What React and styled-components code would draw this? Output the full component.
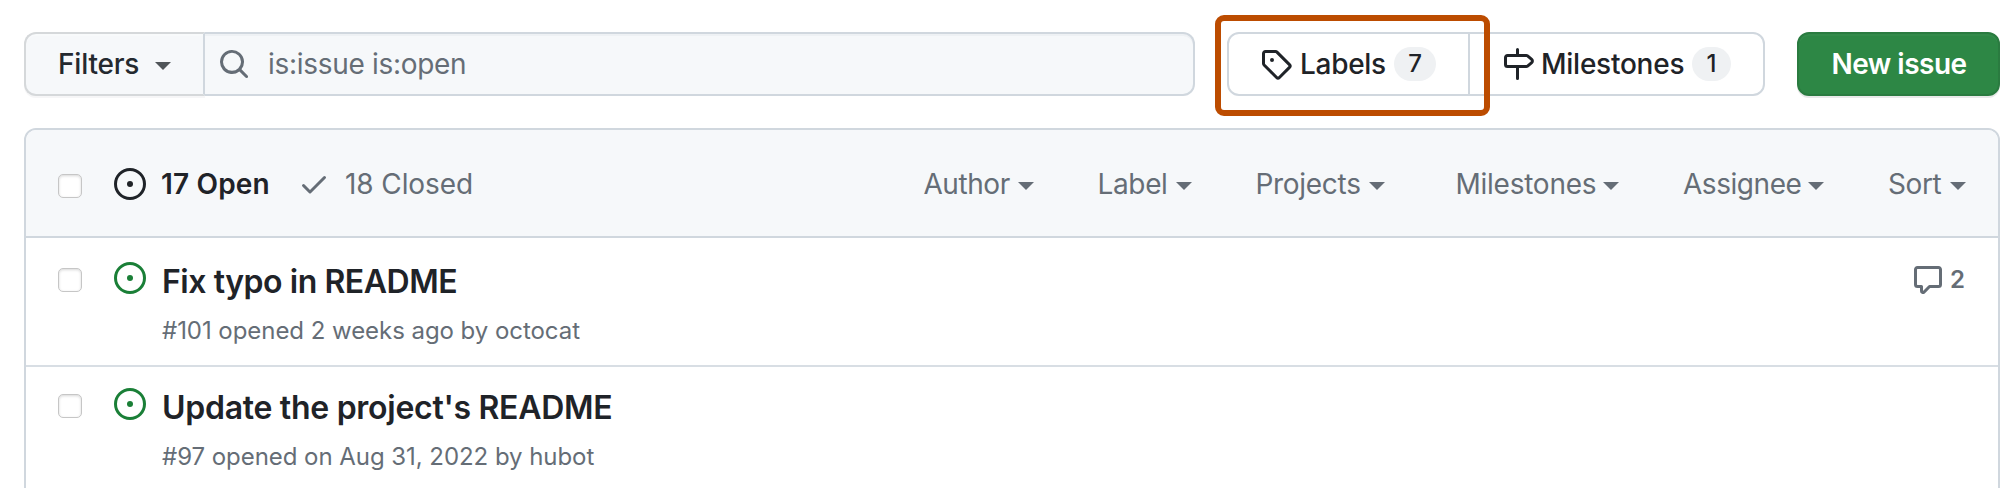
import React from 'react';
import styled, { createGlobalStyle } from 'styled-components';

const GlobalStyle = createGlobalStyle`
  *, *::before, *::after { box-sizing: border-box; }
  body {
    margin: 0;
    background: #fff;
    color: #1f2328;
    font-family: Inter, "Liberation Sans", sans-serif;
    font-size: 28px;
    line-height: 40px;
    overflow: hidden;
  }
`;

const Page = styled.main`
  height: 488px;
  padding: 32px 10px 0 24px;
  overflow: hidden;
`;

const Toolbar = styled.div`
  display: flex;
  height: 64px;
  width: 1976px;
`;

const Text = styled.span`
  flex: none;
  white-space: nowrap;
  width: ${(p) => p.$w}px;
  margin-left: ${(p) => p.$gap || 0}px;
  letter-spacing: ${(p) => p.$ls || 0}px;
  font-weight: ${(p) => p.$weight || 400};
`;

const Icon = styled.svg.attrs({ viewBox: '0 0 16 16', width: 32, height: 32, 'aria-hidden': true })`
  flex: none;
  display: block;
  fill: currentColor;
`;

const Caret = styled.span`
  flex: none;
  width: 0;
  height: 0;
  margin-top: 4px;
  border: 8px solid transparent;
  border-top-color: currentColor;
  border-bottom-width: 0;
`;

const FiltersButton = styled.button`
  display: flex;
  align-items: center;
  gap: 16px;
  width: 181px;
  height: 64px;
  padding: 0 0 0 32px;
  border: 2px solid #d5d8da;
  border-right-color: #d0d7de;
  border-radius: 12px 0 0 12px;
  background: #f6f8fa;
  box-shadow: 0 2px 0 rgba(31, 35, 40, 0.04), inset 0 2px 0 rgba(255, 255, 255, 0.25);
  color: #24292f;
  font: inherit;
  text-align: left;

  ${Caret} { color: #505559; }
`;

const SearchField = styled.div`
  display: flex;
  align-items: center;
  width: 990px;
  height: 64px;
  padding-left: 13px;
  gap: 18px;
  border: 2px solid #d0d7de;
  border-left: 0;
  border-radius: 0 12px 12px 0;
  background: #f6f8fa;
  box-shadow: inset 0 2px 0 rgba(208, 215, 222, 0.2);
  color: #656d76;
`;

const Subnav = styled.nav`
  position: relative;
  display: flex;
  width: 538px;
  height: 64px;
  margin-left: 32px;
  border: 2px solid #d0d7de;
  border-radius: 12px;
`;

const SubnavLink = styled.a`
  display: flex;
  align-items: center;
  width: ${(p) => p.$width}px;
  padding-left: ${(p) => p.$pad}px;
  border-right: ${(p) => (p.$divided ? '2px solid #d0d7de' : '0')};
`;

const Counter = styled.span`
  width: ${(p) => p.$width}px;
  height: 34px;
  margin-left: 8px;
  border-radius: 17px;
  background: #eff1f3;
  font-size: 24px;
  font-weight: 500;
  line-height: 34px;
  text-align: center;
`;

const Highlight = styled.div`
  position: absolute;
  left: -14px;
  top: -19px;
  width: 275px;
  height: 101px;
  border: 6px solid #bc4c00;
  border-radius: 9px;
  pointer-events: none;
`;

const NewIssueButton = styled.button`
  display: flex;
  align-items: center;
  width: 203px;
  height: 64px;
  margin-left: 32px;
  padding: 0 0 0 30px;
  border: 2px solid #2a7b40;
  border-radius: 12px;
  background: #2d8745;
  box-shadow: 0 2px 0 rgba(31, 35, 40, 0.1), inset 0 2px 0 rgba(255, 255, 255, 0.03);
  color: #fff;
  font: inherit;
`;

const IssueBox = styled.section`
  width: 1976px;
  height: 400px;
  margin-top: 32px;
  border: 2px solid #d0d7de;
  border-radius: 12px 12px 0 0;
  overflow: hidden;
`;

const BoxHeader = styled.header`
  display: flex;
  align-items: center;
  height: 108px;
  padding: 2px 0 0 32px;
  border-bottom: 2px solid #d0d7de;
  background: #f6f8fa;
  color: #656d76;
`;

const Checkbox = styled.span`
  flex: none;
  width: 24px;
  height: 24px;
  margin-top: ${(p) => p.$drop}px;
  border: 1px solid #c6c6c6;
  border-radius: 5px;
  background: #fff;
  box-shadow: inset 0 1px 3px rgba(0, 0, 0, 0.16);
`;

const StateTab = styled.div`
  display: flex;
  align-items: center;
  gap: 15px;
  margin-left: ${(p) => p.$gap}px;
  color: ${(p) => (p.$active ? '#1f2328' : 'inherit')};
`;

const Menus = styled.div`
  display: flex;
  margin-left: auto;
  gap: 64px;
  padding-right: 32px;
`;

const Menu = styled.div`
  display: flex;
  align-items: center;
  gap: 8px;
  margin-left: ${(p) => p.$gap || 0}px;
`;

const IssueRow = styled.article`
  display: flex;
  height: ${(p) => p.$height}px;
  padding: ${(p) => p.$top}px 33px 0 32px;
  border-bottom: 2px solid #d8dee4;
`;

const OpenIcon = styled(Icon)`
  margin: 8px 16px 0 32px;
  color: #1a7f37;
`;

const IssueBody = styled.div`
  display: flex;
  flex-direction: column;
`;

const Title = styled.h2`
  margin: 4px 0 0;
  font-size: 32px;
  line-height: 48px;
  font-weight: 600;
  white-space: nowrap;
  letter-spacing: ${(p) => p.$ls}px;
`;

const Meta = styled.p`
  margin: 7px 0 0;
  color: #656d76;
  font-size: 24px;
  line-height: 36px;
  white-space: nowrap;
  letter-spacing: ${(p) => p.$ls}px;
`;

const Comments = styled.a`
  display: flex;
  align-items: center;
  gap: 6px;
  height: 32px;
  margin: 10px 0 0 auto;
  color: #656d76;
  font-size: 24px;
  font-weight: 600;
`;

const OpenPaths = () => (
  <>
    <path d="M8 9.5a1.5 1.5 0 1 0 0-3 1.5 1.5 0 0 0 0 3Z" />
    <path d="M8 0a8 8 0 1 1 0 16A8 8 0 0 1 8 0ZM1.5 8a6.5 6.5 0 1 0 13 0 6.5 6.5 0 0 0-13 0Z" />
  </>
);

const menus = [
  { label: 'Author', w: 86, ls: -0.45 },
  { label: 'Label', w: 70, ls: -0.35 },
  { label: 'Projects', w: 105, ls: -0.3 },
  { label: 'Milestones', w: 139.5, ls: -0.25, gap: 7 },
  { label: 'Assignee', w: 117, ls: -0.45 },
  { label: 'Sort', w: 54, ls: -0.4 },
];

const issues = [
  { title: 'Fix typo in README', ls: -0.45, meta: '#101 opened 2 weeks ago by octocat', mls: -0.05, comments: 2, height: 129, top: 16 },
  { title: "Update the project's README", ls: -0.28, meta: '#97 opened on Aug 31, 2022 by hubot', mls: -0.05, height: 140, top: 13 },
];

export default function App() {
  return (
    <>
      <GlobalStyle />
      <Page>
        <Toolbar>
          <FiltersButton>
            <Text $w={81} $ls={-0.2} $weight={500}>Filters</Text>
            <Caret />
          </FiltersButton>
          <SearchField>
            <Icon>
              <path d="M10.68 11.74a6 6 0 0 1-7.922-8.982 6 6 0 0 1 8.982 7.922l3.04 3.04a.749.749 0 0 1-.326 1.275.749.749 0 0 1-.734-.215ZM11.5 7a4.499 4.499 0 1 0-8.997 0A4.499 4.499 0 0 0 11.5 7Z" />
            </Icon>
            <Text $w={200} $ls={-0.3}>is:issue is:open</Text>
          </SearchField>
          <Subnav>
            <SubnavLink $width={241} $pad={31} $divided>
              <Icon>
                <path d="M1 7.775V2.75C1 1.784 1.784 1 2.75 1h5.025c.464 0 .91.184 1.238.513l6.25 6.25a1.75 1.75 0 0 1 0 2.474l-5.026 5.026a1.75 1.75 0 0 1-2.474 0l-6.25-6.25A1.752 1.752 0 0 1 1 7.775Zm1.5 0c0 .066.026.13.073.177l6.25 6.25a.25.25 0 0 0 .354 0l5.025-5.025a.25.25 0 0 0 0-.354l-6.25-6.25a.25.25 0 0 0-.177-.073H2.75a.25.25 0 0 0-.25.25ZM6 5a1 1 0 1 1 0 2 1 1 0 0 1 0-2Z" />
              </Icon>
              <Text $w={86} $gap={8} $ls={-0.3} $weight={500}>Labels</Text>
              <Counter $width={42}>7</Counter>
            </SubnavLink>
            <SubnavLink $width={293} $pad={32}>
              <Icon>
                <path d="M7.75 0a.75.75 0 0 1 .75.75V3h3.634c.414 0 .814.147 1.13.414l2.07 1.75a1.75 1.75 0 0 1 0 2.672l-2.07 1.75a1.75 1.75 0 0 1-1.13.414H8.5v5.25a.75.75 0 0 1-1.5 0V10H2.75A1.75 1.75 0 0 1 1 8.25v-3.5C1 3.784 1.784 3 2.75 3H7V.75A.75.75 0 0 1 7.75 0Zm4.384 8.5a.25.25 0 0 0 .161-.06l2.07-1.75a.248.248 0 0 0 0-.38l-2.07-1.75a.25.25 0 0 0-.161-.06H2.75a.25.25 0 0 0-.25.25v3.5c0 .138.112.25.25.25h9.384Z" />
              </Icon>
              <Text $w={143} $gap={7} $ls={-0.25} $weight={500}>Milestones</Text>
              <Counter $width={39}>1</Counter>
            </SubnavLink>
            <Highlight />
          </Subnav>
          <NewIssueButton>
            <Text $w={140} $ls={-0.5} $weight={600}>New issue</Text>
          </NewIssueButton>
        </Toolbar>

        <IssueBox>
          <BoxHeader>
            <Checkbox $drop={4} />
            <StateTab $gap={32} $active>
              <Icon><OpenPaths /></Icon>
              <Text $w={113} $ls={0.15} $weight={600}>17 Open</Text>
            </StateTab>
            <StateTab $gap={24}>
              <Icon>
                <path d="M13.78 4.22a.75.75 0 0 1 0 1.06l-7.25 7.25a.75.75 0 0 1-1.06 0L2.22 9.28a.751.751 0 0 1 .018-1.042.751.751 0 0 1 1.042-.018L6 10.94l6.72-6.72a.75.75 0 0 1 1.06 0Z" />
              </Icon>
              <Text $w={130} $ls={-0.1}>18 Closed</Text>
            </StateTab>
            <Menus>
              {menus.map((m) => (
                <Menu key={m.label} $gap={m.gap}>
                  <Text $w={m.w} $ls={m.ls}>{m.label}</Text>
                  <Caret />
                </Menu>
              ))}
            </Menus>
          </BoxHeader>
          {issues.map((issue) => (
            <IssueRow key={issue.title} $height={issue.height} $top={issue.top}>
              <Checkbox $drop={14} />
              <OpenIcon><OpenPaths /></OpenIcon>
              <IssueBody>
                <Title $ls={issue.ls}>{issue.title}</Title>
                <Meta $ls={issue.mls}>{issue.meta}</Meta>
              </IssueBody>
              {issue.comments && (
                <Comments>
                  <Icon>
                    <path d="M1 2.75C1 1.784 1.784 1 2.75 1h10.5c.966 0 1.75.784 1.75 1.75v7.5A1.75 1.75 0 0 1 13.25 12H9.06l-2.573 2.573A1.458 1.458 0 0 1 4 13.543V12H2.75A1.75 1.75 0 0 1 1 10.25Zm1.5 0v7.5c0 .138.112.25.25.25h2a.75.75 0 0 1 .75.75v2.19l2.72-2.72a.749.749 0 0 1 .53-.22h4.5a.25.25 0 0 0 .25-.25v-7.5a.25.25 0 0 0-.25-.25H2.75a.25.25 0 0 0-.25.25Z" />
                  </Icon>
                  <span>{issue.comments}</span>
                </Comments>
              )}
            </IssueRow>
          ))}
        </IssueBox>
      </Page>
    </>
  );
}
